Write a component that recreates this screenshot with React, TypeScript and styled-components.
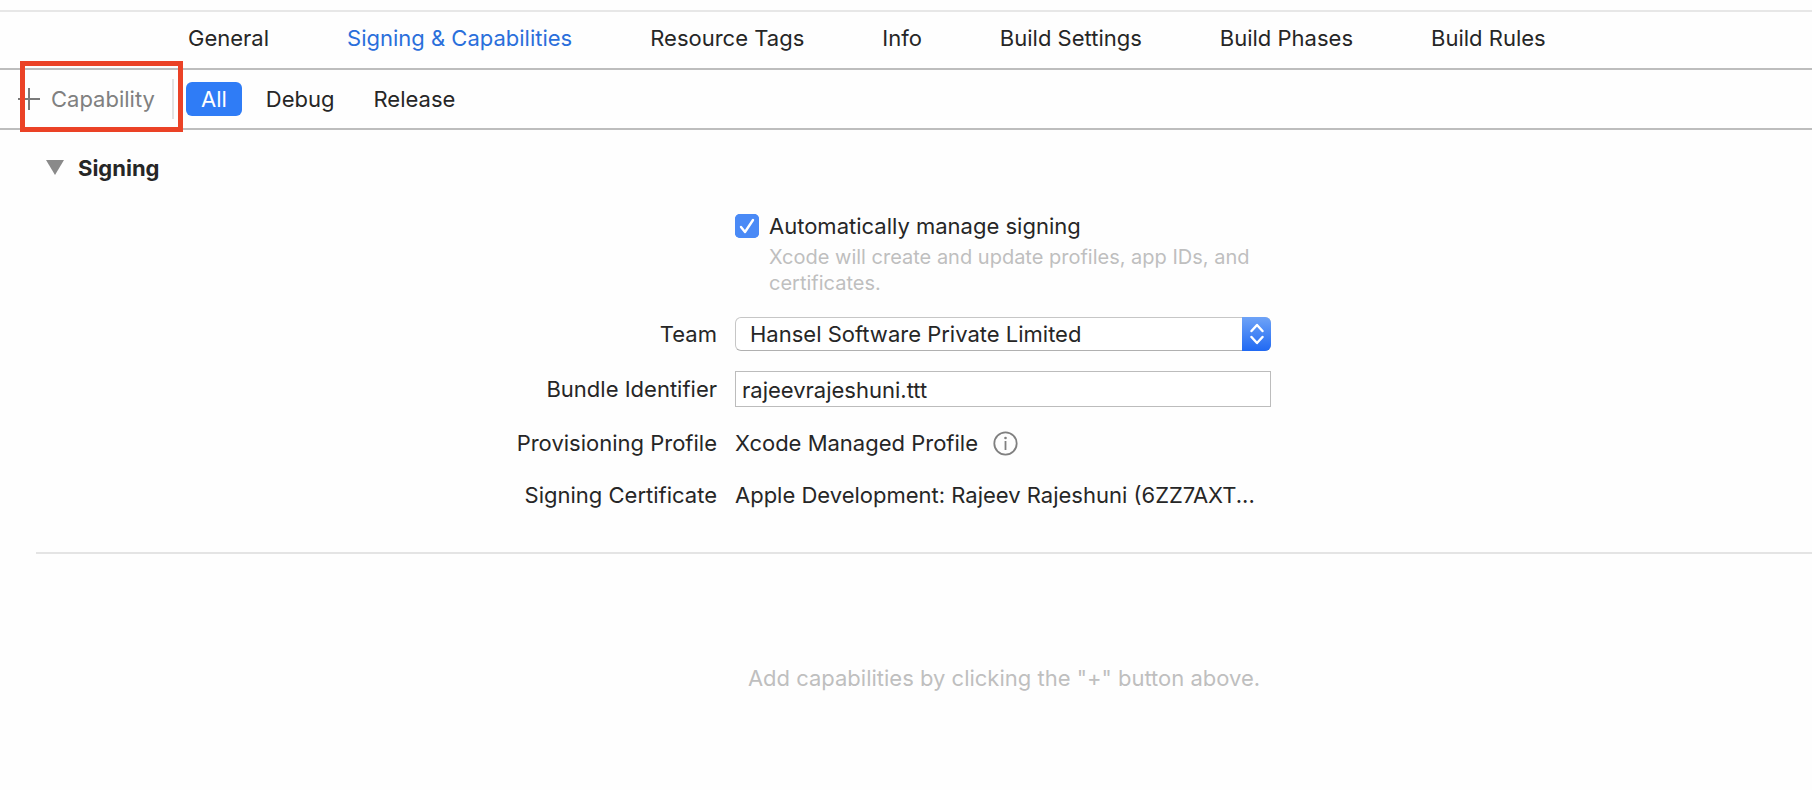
import React, { useState } from "react";
import styled, { createGlobalStyle } from "styled-components";

const GlobalStyle = createGlobalStyle`
  *, *::before, *::after { box-sizing: border-box; }
  body {
    margin: 0;
    background: #fefefe;
    color: #262626;
    font-family: Inter, "Liberation Sans", sans-serif;
    font-size: 22px;
    line-height: 26px;
  }
  button, input, select { font: inherit; color: inherit; margin: 0; }
  button { border: 0; background: none; padding: 0; white-space: nowrap; }
`;

const Page = styled.div`
  padding-top: 10px;
`;

const TabBar = styled.nav`
  display: flex;
  gap: 78px;
  height: 60px;
  padding: 0 20px 4px 188px;
  border-top: 2px solid #e7e7e7;
  border-bottom: 2px solid #bdbdbd;
`;

const Tab = styled.button<{ $active: boolean }>`
  color: ${(p) => (p.$active ? "#2a6fdb" : "inherit")};
`;

const Toolbar = styled.div`
  display: flex;
  align-items: center;
  height: 60px;
  border-bottom: 2px solid #bdbdbd;
`;

const CapabilityGroup = styled.div`
  position: relative;
  display: flex;
  align-items: center;
  justify-content: space-between;
  width: 174px;
  height: 40px;
  margin-right: 12px;
  padding-left: 18px;
  border-right: 2px solid #e3e3e3;
`;

const CapabilityButton = styled.button`
  display: flex;
  align-items: center;
  gap: 11px;
  color: #808080;
`;

const Highlight = styled.div`
  position: absolute;
  inset: -18px -11px -13px 20px;
  border: 5px solid #eb4226;
  pointer-events: none;
`;

const Filters = styled.div`
  display: flex;
  gap: 9px;
`;

const Filter = styled.button<{ $active: boolean }>`
  height: 34px;
  padding: 0 15px;
  border-radius: 6px;
  background: ${(p) => (p.$active ? "#2f7cf6" : "transparent")};
  color: ${(p) => (p.$active ? "#ffffff" : "inherit")};
`;

const Section = styled.section`
  margin-left: 36px;
  padding: 25px 0 41px;
  border-bottom: 2px solid #e4e4e4;
`;

const SectionHeading = styled.h2`
  margin: 0 0 32px;
  font-size: 22px;
  font-weight: 700;
`;

const Disclosure = styled.button`
  display: flex;
  align-items: center;
  gap: 14px;
  padding-left: 10px;
`;

const Form = styled.div`
  display: grid;
  grid-template-columns: minmax(max-content, 681px) minmax(0, 536px);
  gap: 20px 18px;
  align-items: center;
`;

const CheckField = styled.div`
  grid-column: 2;
  display: grid;
  grid-template-columns: 24px 1fr;
  gap: 5px 10px;
  align-items: center;
  padding-bottom: 1px;
`;

const CheckBox = styled.span`
  display: grid;
  width: 24px;
  height: 24px;
  border-radius: 5px;
  background: #4a8af6;

  input, svg { grid-area: 1 / 1; width: 24px; height: 24px; }
  input { appearance: none; border: 1px solid #a9a9a9; border-radius: 5px; background: #fff; }
  input:checked { border: 0; background: #4a8af6; }
  input:not(:checked) + svg { visibility: hidden; }
  svg { pointer-events: none; z-index: 1; }
`;

const Note = styled.p`
  grid-column: 2;
  margin: 0;
  font-size: 20px;
  color: #bfbfbf;
`;

const FieldLabel = styled.label`
  text-align: right;
  white-space: nowrap;
`;

const SelectBox = styled.div`
  display: grid;
  height: 34px;
  border: 1px solid #c6c6c6;
  border-bottom-color: #b0b0b0;
  border-radius: 6px;
  background: #fff;
`;

const Select = styled.select`
  grid-area: 1 / 1;
  width: 100%;
  padding: 0 40px 0 14px;
  appearance: none;
  border: 0;
  background: transparent;
`;

const Stepper = styled.span`
  grid-area: 1 / 1;
  justify-self: end;
  display: grid;
  place-items: center;
  width: 29px;
  margin: -1px;
  border-radius: 0 6px 6px 0;
  background: linear-gradient(#6ea3f7, #2069f3);
  pointer-events: none;
`;

const TextInput = styled.input`
  width: 100%;
  height: 36px;
  padding: 2px 6px 0;
  border: 1px solid #bcbcbc;
  border-radius: 0;
  background: #fff;
`;

const Value = styled.div`
  display: flex;
  align-items: center;
  gap: 15px;
  height: 32px;
  min-width: 0;
`;

const Truncated = styled.span`
  overflow: hidden;
  text-overflow: ellipsis;
  white-space: nowrap;
`;

const InfoButton = styled.button`
  display: flex;
`;

const EmptyHint = styled.p`
  margin: 0;
  padding: 111px 0 40px 196px;
  text-align: center;
  color: #bfbfbf;
`;

const TABS = [
  "General",
  "Signing & Capabilities",
  "Resource Tags",
  "Info",
  "Build Settings",
  "Build Phases",
  "Build Rules",
];

const FILTERS = ["All", "Debug", "Release"];

export default function App() {
  const [tab, setTab] = useState(TABS[1]);
  const [filter, setFilter] = useState(FILTERS[0]);
  const [open, setOpen] = useState(true);

  return (
    <Page>
      <GlobalStyle />
      <TabBar>
        {TABS.map((name) => (
          <Tab key={name} $active={name === tab} onClick={() => setTab(name)}>
            {name}
          </Tab>
        ))}
      </TabBar>

      <Toolbar>
        <CapabilityGroup>
          <CapabilityButton>
            <svg width="22" height="22" viewBox="0 0 22 22" stroke="#7a7a7a" strokeWidth="2" aria-hidden="true">
              <path d="M11 0v22M0 11h22" />
            </svg>
            Capability
          </CapabilityButton>
          <Highlight />
        </CapabilityGroup>
        <Filters>
          {FILTERS.map((name) => (
            <Filter key={name} $active={name === filter} onClick={() => setFilter(name)}>
              {name}
            </Filter>
          ))}
        </Filters>
      </Toolbar>

      <main>
        <Section>
          <SectionHeading>
            <Disclosure aria-expanded={open} onClick={() => setOpen(!open)}>
              <svg width="18" height="16" viewBox="0 0 18 16" aria-hidden="true">
                <path d={open ? "M0 0h18L9 15z" : "M2 0l14 8-14 8z"} fill="#8a8a8a" />
              </svg>
              Signing
            </Disclosure>
          </SectionHeading>

          {open && (
            <Form>
              <CheckField>
                <CheckBox>
                  <input type="checkbox" id="auto-signing" defaultChecked />
                  <svg viewBox="0 0 24 24" fill="none" stroke="#fff" strokeWidth="2.4" strokeLinecap="round" strokeLinejoin="round" aria-hidden="true">
                    <path d="M6 13l4 5 8-12" />
                  </svg>
                </CheckBox>
                <label htmlFor="auto-signing">Automatically manage signing</label>
                <Note>Xcode will create and update profiles, app IDs, and certificates.</Note>
              </CheckField>

              <FieldLabel htmlFor="team">Team</FieldLabel>
              <SelectBox>
                <Select id="team">
                  <option>Hansel Software Private Limited</option>
                </Select>
                <Stepper>
                  <svg width="14" height="22" viewBox="0 0 14 22" fill="none" stroke="#fff" strokeWidth="2.4" strokeLinecap="round" strokeLinejoin="round" aria-hidden="true">
                    <path d="M1.500 8L7 2l5.500 6M1.500 14L7 20l5.500-6" />
                  </svg>
                </Stepper>
              </SelectBox>

              <FieldLabel htmlFor="bundle">Bundle Identifier</FieldLabel>
              <TextInput id="bundle" defaultValue="rajeevrajeshuni.ttt" spellCheck={false} />

              <FieldLabel as="span">Provisioning Profile</FieldLabel>
              <Value>
                Xcode Managed Profile
                <InfoButton aria-label="Profile information">
                  <svg width="25" height="25" viewBox="0 0 25 25" fill="none" stroke="#808080" strokeWidth="1.800" aria-hidden="true">
                    <circle cx="12.5" cy="12.5" r="11.2" />
                    <path d="M12.500 10v9" />
                    <circle cx="12.5" cy="7" r="1.300" fill="#808080" stroke="none" />
                  </svg>
                </InfoButton>
              </Value>

              <FieldLabel as="span">Signing Certificate</FieldLabel>
              <Value>
                <Truncated>Apple Development: Rajeev Rajeshuni (6ZZ7AXT...</Truncated>
              </Value>
            </Form>
          )}
        </Section>

        <EmptyHint>Add capabilities by clicking the "+" button above.</EmptyHint>
      </main>
    </Page>
  );
}
